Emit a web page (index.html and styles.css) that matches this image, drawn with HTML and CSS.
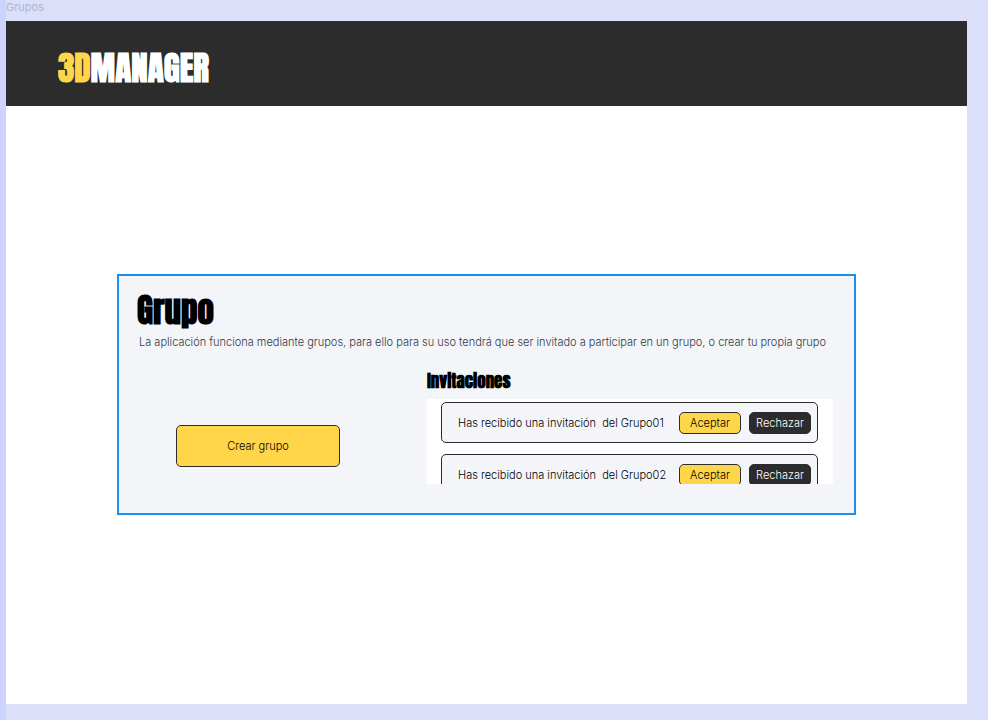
FILE: index.html
```html
<!DOCTYPE html>
<html lang="es">
<head>
<meta charset="utf-8">
<meta name="viewport" content="width=device-width, initial-scale=1">
<title>3DManager</title>
<link rel="stylesheet" href="styles.css">
</head>
<body>
<div class="canvas">
  <div class="frame-label">Grupos</div>
  <div class="frame">
    <header class="topbar">
      <div class="logo"><span class="logo-accent">3D</span>MANAGER</div>
    </header>
    <main class="content">
      <section class="card">
        <h1 class="title">Grupo</h1>
        <p class="intro">La aplicación funciona mediante grupos, para ello para su uso tendrá que ser invitado a participar en un grupo, o crear tu propia grupo</p>
        <div class="columns">
          <div class="create">
            <button class="button button-create" type="button">Crear grupo</button>
          </div>
          <section class="invitations">
            <h2 class="subtitle">Invitaciones</h2>
            <ul class="list">
              <li class="invitation">
                <span class="message">Has recibido una invitación&nbsp; del Grupo01</span>
                <button class="button" type="button">Aceptar</button>
                <button class="button button-dark" type="button">Rechazar</button>
              </li>
              <li class="invitation">
                <span class="message">Has recibido una invitación&nbsp; del Grupo02</span>
                <button class="button" type="button">Aceptar</button>
                <button class="button button-dark" type="button">Rechazar</button>
              </li>
            </ul>
          </section>
        </div>
      </section>
    </main>
  </div>
</div>
</body>
</html>
```
FILE: styles.css
```css
* {
  box-sizing: border-box;
}

body {
  margin: 0;
  background: #dbdff9;
  font-family: Inter, sans-serif;
  font-size: 11px;
  font-weight: 300;
  line-height: 16px;
  color: #000;
}

.canvas {
  display: flex;
  flex-direction: column;
  min-height: 100vh;
  padding: 0 21px 16px 0;
  border-left: 6px solid #ccd3ff;
}

.frame-label {
  height: 21px;
  font-weight: 400;
  line-height: 14px;
  color: #b0b4cd;
}

.frame {
  display: flex;
  flex: 1;
  flex-direction: column;
  background: #fff;
}

.topbar {
  display: flex;
  align-items: center;
  height: 85px;
  padding: 8px 52px 0;
  background: #2c2c2c;
}

.logo,
.title,
.subtitle {
  margin: 0;
  font-family: Impact, Anton, "Liberation Sans Narrow", "Liberation Sans", sans-serif;
  font-weight: 700;
}

.logo {
  font-size: 33px;
  line-height: 40px;
  color: #fff;
}

.logo-accent {
  color: #ffd54a;
}

.content {
  flex: 1;
  padding: 168px 111px 0;
}

.card {
  padding: 16px 19px 29px 18px;
  border: 2px solid #1890ee;
  background: #f4f5f8;
}

.title {
  font-size: 33px;
  line-height: 36px;
  color: #000;
}

.intro {
  margin: 6px 0 0 2px;
  color: #2f3949;
  white-space: nowrap;
}

.columns {
  display: grid;
  grid-template-columns: 1fr 406px;
  margin: 20px 2px 0 0;
}

.create {
  padding: 55px 0 0 39px;
}

.subtitle {
  font-size: 17px;
  line-height: 22px;
  color: #000;
}

.list {
  height: 85px;
  margin: 7px 0 0;
  padding: 3px 15px 0 14px;
  overflow: hidden;
  background: #fff;
  list-style: none;
}

.invitation {
  display: flex;
  align-items: center;
  gap: 8px;
  height: 41px;
  margin-bottom: 11px;
  padding: 0 6px 0 16px;
  border: 1px solid #2c2c2c;
  border-radius: 5px;
  background: #f4f5f8;
}

.message {
  flex: 1;
  white-space: nowrap;
}

.button {
  width: 62px;
  height: 22px;
  padding: 0;
  border: 1px solid #2c2c2c;
  border-radius: 5px;
  background: #ffd54a;
  color: #000;
  font: inherit;
}

.button-dark {
  background: #2c2c2c;
  color: #fff;
}

.button-create {
  width: 164px;
  height: 42px;
}
```
